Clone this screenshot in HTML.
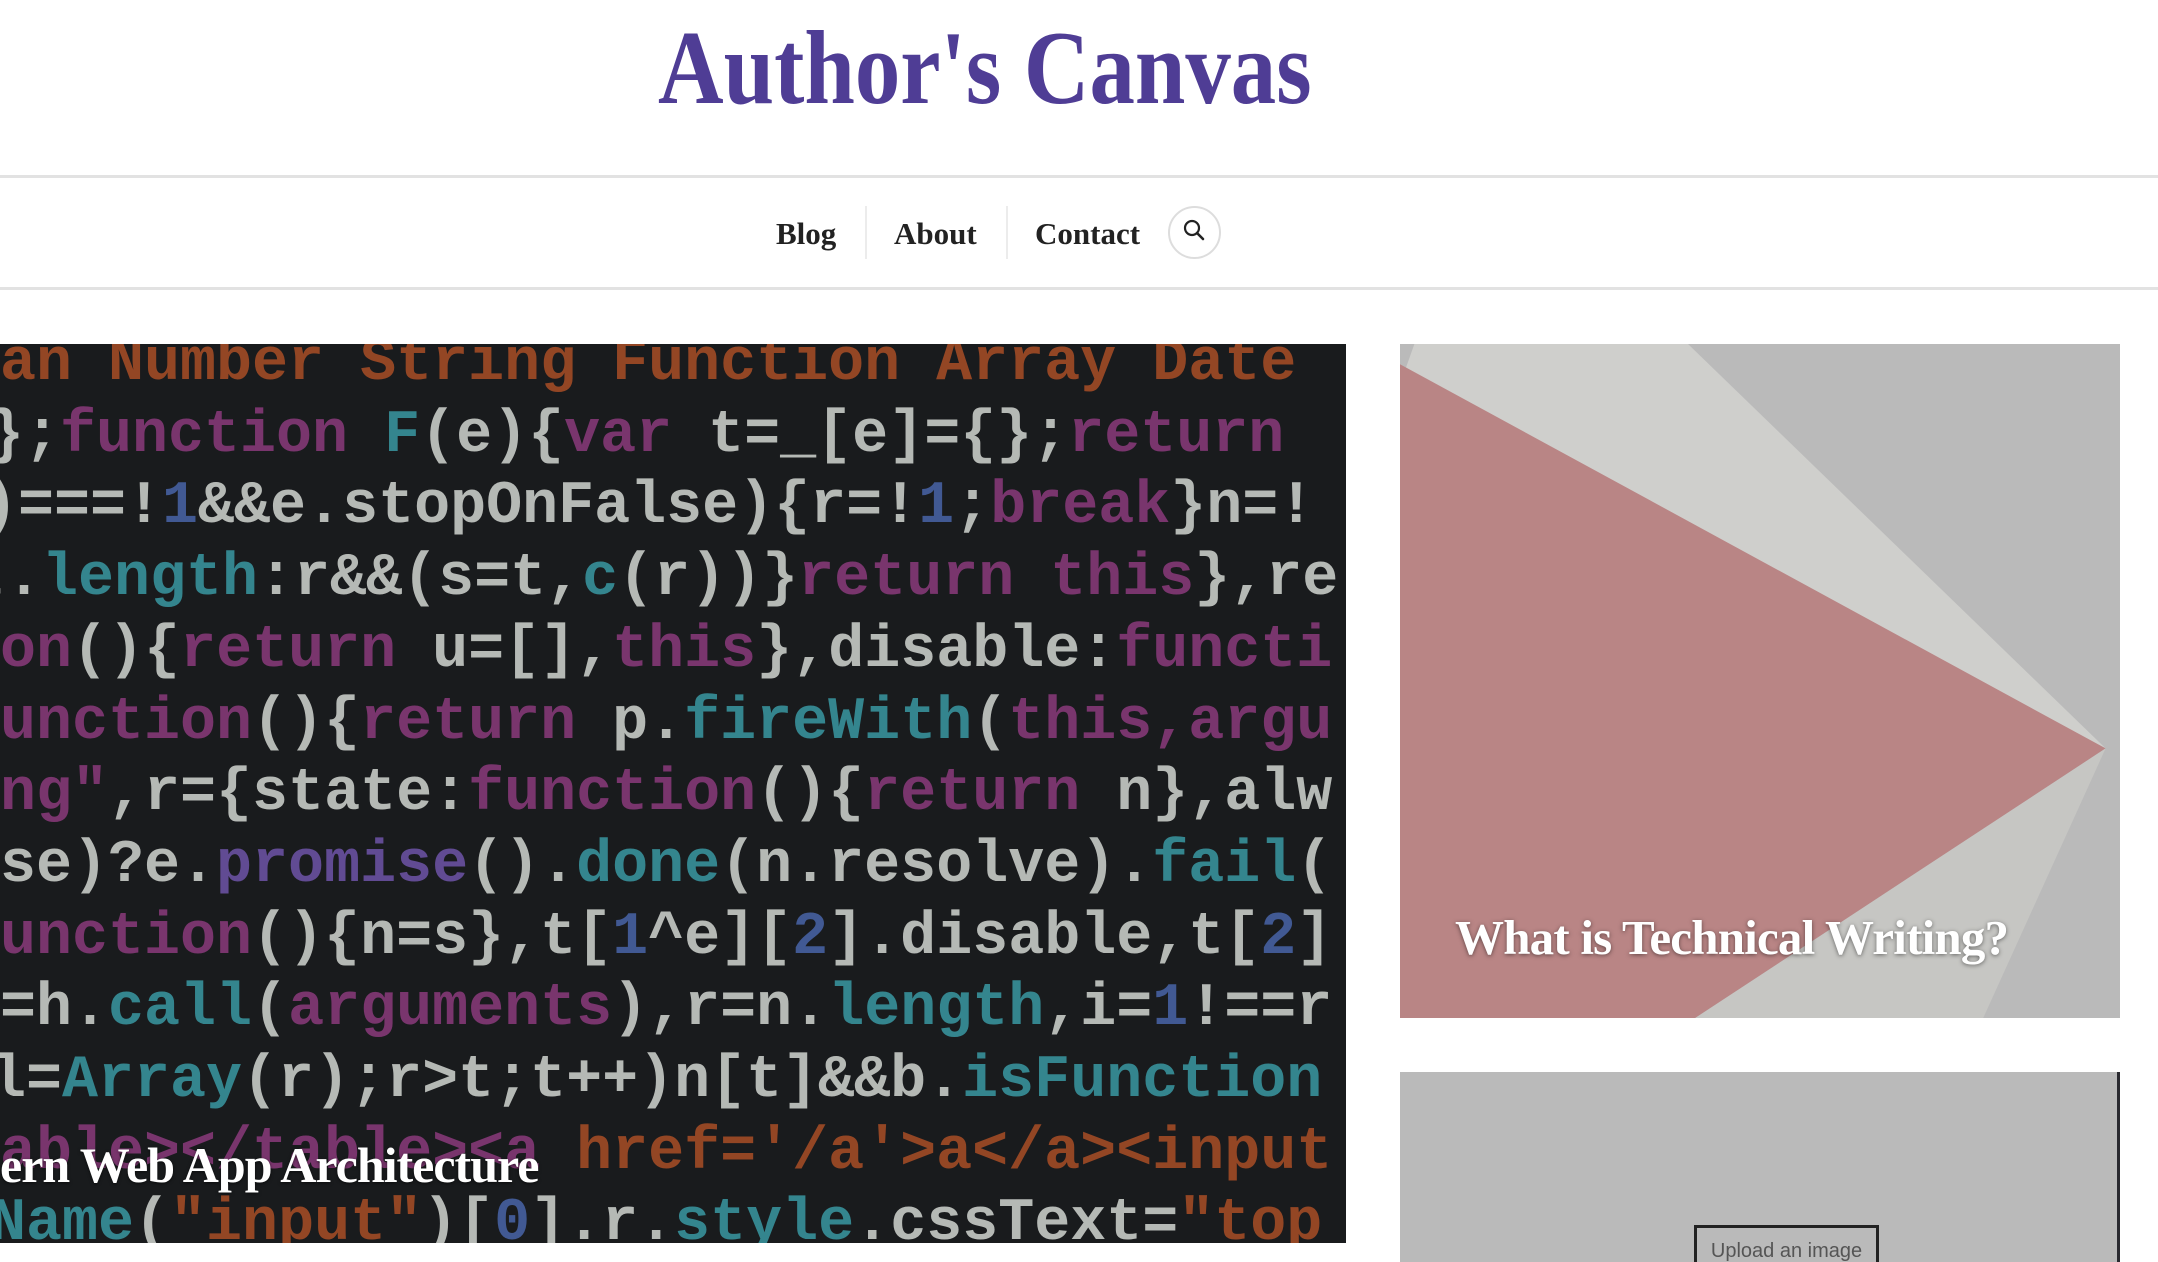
<!DOCTYPE html>
<html><head><meta charset="utf-8"><style>
*{margin:0;padding:0;box-sizing:border-box}
html,body{width:2158px;height:1262px;overflow:hidden;background:#fff;position:relative;font-family:"Liberation Serif",serif}
.title{position:absolute;left:658px;top:8px;font-size:105px;font-weight:bold;color:#4f3d95;white-space:nowrap;transform:scaleX(0.865);transform-origin:left top;line-height:120px}
.hr{position:absolute;left:0;width:2158px;height:3px;background:#e2e2e2}
.nav{position:absolute;top:214px;font-size:31px;font-weight:bold;color:#222;line-height:40px;white-space:nowrap}
.sep{position:absolute;top:206px;width:2px;height:53px;background:#ececec}
.circ{position:absolute;left:1168px;top:206px;width:53px;height:53px;border:2px solid #ddd;border-radius:50%}
.code{position:absolute;left:0;top:344px;width:1346px;height:899px;background:#1d1f22;overflow:hidden}
.code pre{position:absolute;left:0;top:-15px;font-family:"Liberation Mono",monospace;font-size:60px;line-height:71.7px;color:#cfd3cf;font-weight:bold;letter-spacing:0px}
.o{color:#a8502a}.p{color:#8a3d7d}.c{color:#3c98a2}.b{color:#4a66a8}.v{color:#6f56a8}
.shade{position:absolute;inset:0;background:rgba(0,0,0,0.12)}
.mt{position:absolute;left:0;top:1136px;font-size:50px;font-weight:bold;color:#fff;white-space:nowrap;letter-spacing:-1px;text-shadow:0 1px 3px rgba(0,0,0,.6)}
.card{position:absolute;left:1400px;top:344px;width:720px;height:674px;background:#bababa;overflow:hidden}
.card svg{position:absolute;left:0;top:0}
.ct{position:absolute;left:55px;top:565px;font-size:49px;font-weight:bold;color:#fff;white-space:nowrap;letter-spacing:-0.8px;text-shadow:0 1px 4px rgba(0,0,0,.5)}
.card2{position:absolute;left:1400px;top:1072px;width:720px;height:200px;background:#bababa;border-right:3px solid #2a2a30}
.up{position:absolute;left:294px;top:153px;width:185px;height:50px;border:3px solid #222;font-family:"Liberation Sans",sans-serif;font-size:20px;color:#555;text-align:center;padding-top:12px}
</style></head><body>
<div class="title">Author's Canvas</div>
<div class="hr" style="top:175px"></div>
<div class="nav" style="left:776px">Blog</div>
<div class="sep" style="left:865px"></div>
<div class="nav" style="left:894px">About</div>
<div class="sep" style="left:1006px"></div>
<div class="nav" style="left:1035px">Contact</div>
<div class="circ"><svg width="49" height="49" viewBox="0 0 49 49"><circle cx="22" cy="20" r="7" fill="none" stroke="#222" stroke-width="2.2"/><line x1="27" y1="25" x2="33" y2="31" stroke="#222" stroke-width="2.6" stroke-linecap="round"/></svg></div>
<div class="hr" style="top:287px"></div>

<div class="code"><pre><span class="o" style="margin-left:-36px">ean Number String Function Array Date</span>
<span style="margin-left:-12px">};</span><span class="p">function</span> <span class="c">F</span>(e){<span class="p">var</span> t=_[e]={};<span class="p">return</span>
<span style="margin-left:-18px">)===!</span><span class="b">1</span>&amp;&amp;e.stopOnFalse){r=!<span class="b">1</span>;<span class="p">break</span>}n=!
<span style="margin-left:-30px">t.</span><span class="c">length</span>:r&amp;&amp;(s=t,<span class="c">c</span>(r))}<span class="p">return this</span>},re
<span class="p" style="margin-left:-36px">ion</span>(){<span class="p">return</span> u=[],<span class="p">this</span>},disable:<span class="p">functi</span>
<span class="p" style="margin-left:-36px">function</span>(){<span class="p">return</span> p.<span class="c">fireWith</span>(<span class="p">this,argu</span>
<span class="p" style="margin-left:-36px">ing"</span>,r={state:<span class="p">function</span>(){<span class="p">return</span> n},alw
<span style="margin-left:-36px">lse)?e.</span><span class="v">promise</span>().<span class="c">done</span>(n.resolve).<span class="c">fail</span>(
<span class="p" style="margin-left:-36px">function</span>(){n=s},t[<span class="b">1</span>^e][<span class="b">2</span>].disable,t[<span class="b">2</span>]
=h.<span class="c">call</span>(<span class="p">arguments</span>),r=n.<span class="c">length</span>,i=<span class="b">1</span>!==r
<span style="margin-left:-10px">l=</span><span class="c">Array</span>(r);r&gt;t;t++)n[t]&amp;&amp;b.<span class="c">isFunction</span>
<span class="p" style="margin-left:-36px">table&gt;&lt;/table&gt;&lt;a</span><span class="o"> href='/a'&gt;a&lt;/a&gt;&lt;input</span>
<span class="c" style="margin-left:-10px">Name</span>(<span class="o">"input"</span>)[<span class="b">0</span>].r.<span class="c">style</span>.cssText=<span class="o">"top</span></pre>
<div class="shade"></div></div>
<div class="mt">ern Web App Architecture</div>

<div class="card">
<svg width="720" height="674" viewBox="0 0 100 100" preserveAspectRatio="none">
<polygon points="2,0 40,0 98,60 0,6" fill="#cfcfcc"/>
<polygon points="0,3 98,60 41,100 0,100" fill="#b98585"/>
<polygon points="98,60 81,100 41,100" fill="#c6c6c3"/>
</svg>
<div class="ct">What is Technical Writing?</div>
</div>
<div class="card2"><div class="up">Upload an image</div></div>
</body></html>
